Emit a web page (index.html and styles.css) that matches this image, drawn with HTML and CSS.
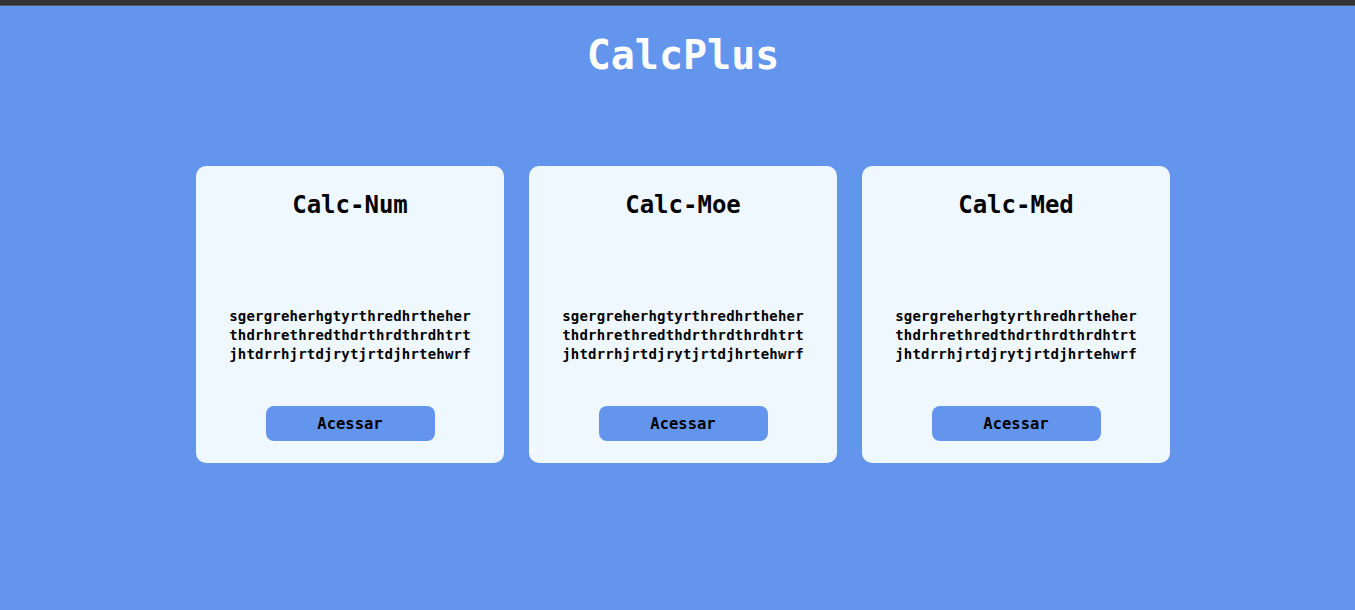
FILE: index.html
```html
<!DOCTYPE html>
<html lang="pt">
<head>
<meta charset="utf-8">
<title>CalcPlus</title>
<link rel="stylesheet" href="styles.css">
</head>
<body>
<div class="topbar"></div>
<div class="page">
<header class="header"><h1 class="brand">CalcPlus</h1></header>
<main class="cards">
  <section class="card">
    <h2 class="card-title">Calc-Num</h2>
    <p class="card-text">sgergreherhgtyrthredhrtheher<br>thdrhrethredthdrthrdthrdhtrt<br>jhtdrrhjrtdjrytjrtdjhrtehwrf</p>
    <button class="btn">Acessar</button>
  </section>
  <section class="card">
    <h2 class="card-title">Calc-Moe</h2>
    <p class="card-text">sgergreherhgtyrthredhrtheher<br>thdrhrethredthdrthrdthrdhtrt<br>jhtdrrhjrtdjrytjrtdjhrtehwrf</p>
    <button class="btn">Acessar</button>
  </section>
  <section class="card">
    <h2 class="card-title">Calc-Med</h2>
    <p class="card-text">sgergreherhgtyrthredhrtheher<br>thdrhrethredthdrthrdthrdhtrt<br>jhtdrrhjrtdjrytjrtdjhrtehwrf</p>
    <button class="btn">Acessar</button>
  </section>
</main>
</div>
</body>
</html>
```
FILE: styles.css
```css
html, body {
  margin: 0;
  padding: 0;
}
body {
  background: #6495ED;
  font-family: "DejaVu Sans Mono", "Liberation Mono", monospace;
  min-height: 610px;
}
.topbar {
  height: 5px;
  background: #333333;
  border-bottom: 1px solid #5a5a5a;
}
.page {
  padding-left: 11px;
}
.header {
  display: flex;
  justify-content: center;
  padding-top: 25px;
}
.brand {
  margin: 0;
  color: #ffffff;
  font-size: 40px;
  line-height: 48px;
  font-weight: bold;
}
.cards {
  display: flex;
  justify-content: center;
  gap: 25px;
  margin-top: 87px;
}
.card {
  width: 308px;
  height: 297px;
  box-sizing: border-box;
  background: #F0F8FF;
  border-radius: 10px;
  padding: 25px 0 22px;
  display: flex;
  flex-direction: column;
  align-items: center;
}
.card-title {
  margin: 0;
  font-size: 24px;
  line-height: 28px;
  font-weight: bold;
  color: #000;
}
.card-text {
  margin: 88px 0 0;
  font-size: 14px;
  line-height: 19px;
  font-weight: bold;
  letter-spacing: 0.2px;
  text-align: center;
  color: #000;
}
.btn {
  margin-top: auto;
  width: 169px;
  height: 35px;
  border: none;
  border-radius: 8px;
  background: #6495ED;
  color: #000;
  font-family: inherit;
  font-size: 15.5px;
  font-weight: bold;
  padding: 1px 0 0;
}
```
